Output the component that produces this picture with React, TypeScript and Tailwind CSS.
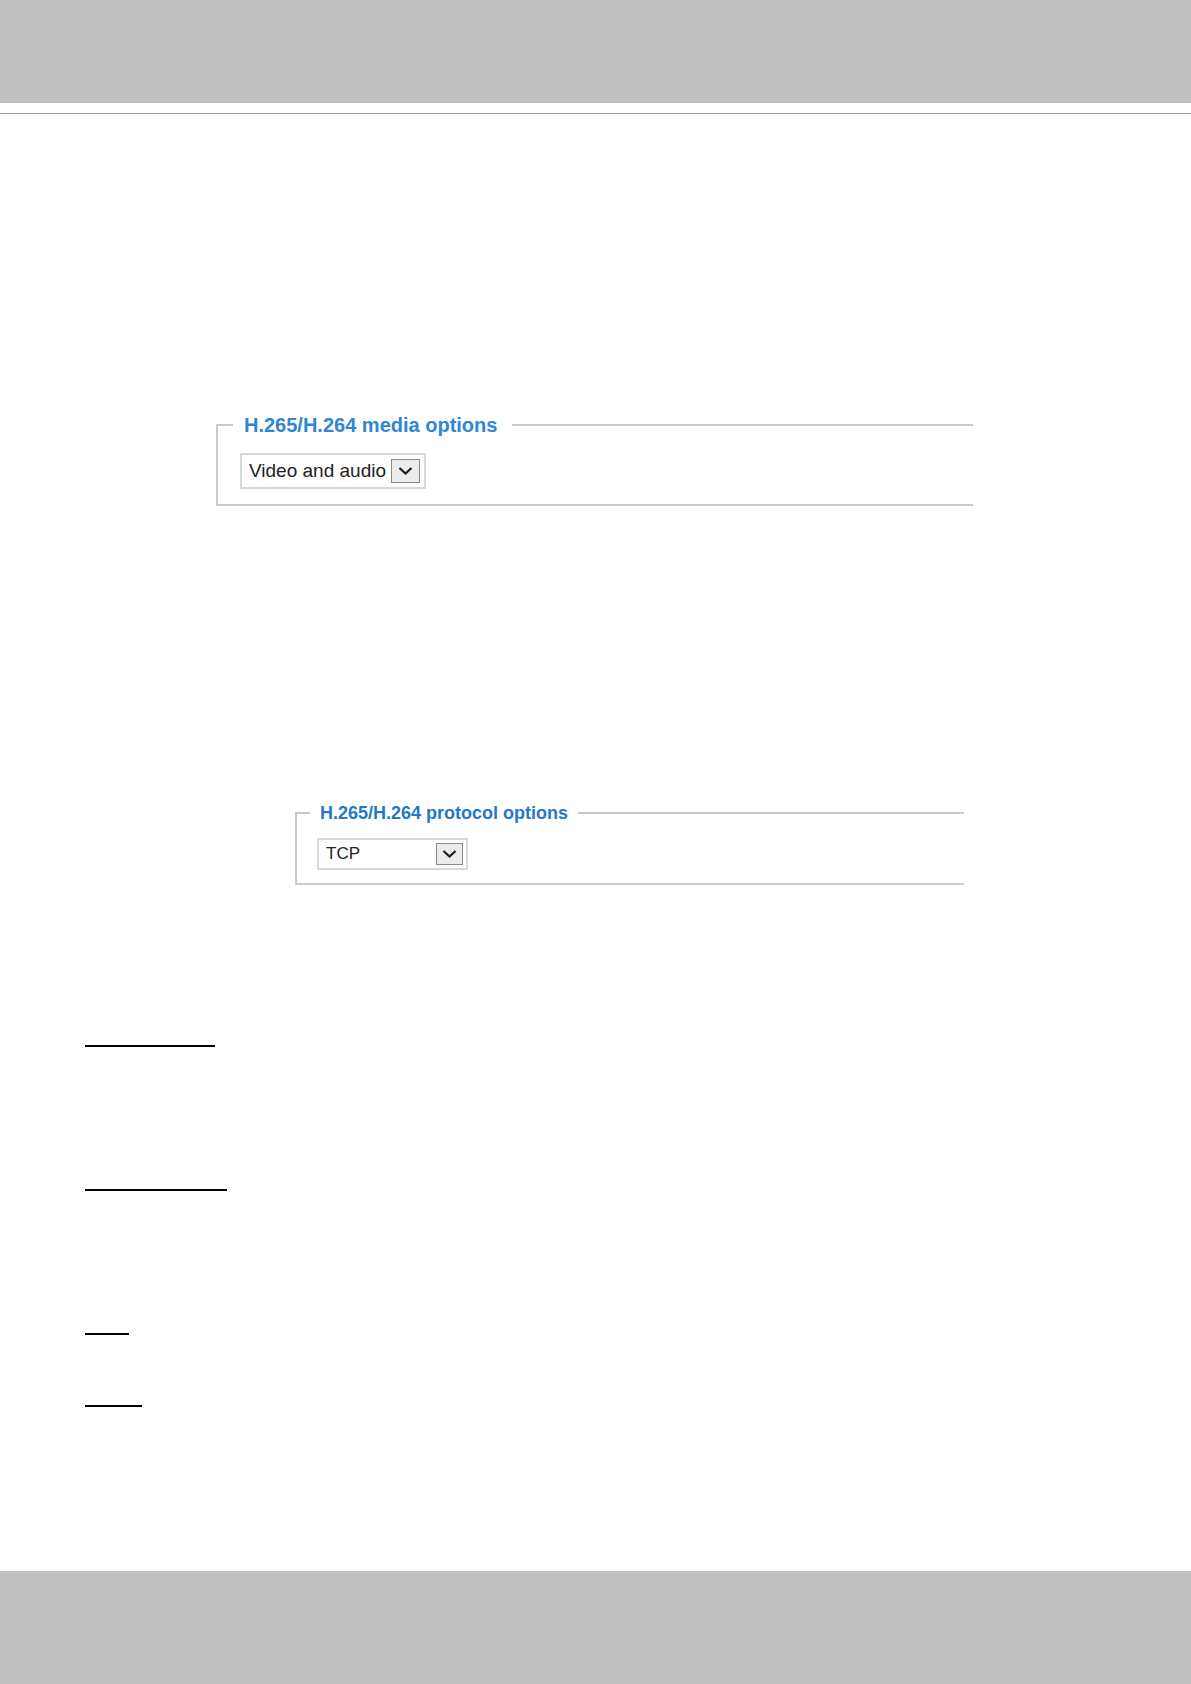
import React, { useState } from "react";

const MEDIA_OPTIONS = ["Video and audio", "Video only", "Audio only"];
const PROTOCOL_OPTIONS = ["TCP", "UDP", "HTTP"];

function Chevron() {
    return (
        <svg width="15" height="10" viewBox="0 0 15 10" fill="none" stroke="#1c1c1c" strokeWidth="2.2">
            <path d="M1.5 2 L7.5 7.5 L13.5 2" />
        </svg>
    );
}

export default function App() {
    const [media, setMedia] = useState(MEDIA_OPTIONS[0]);
    const [protocol, setProtocol] = useState(PROTOCOL_OPTIONS[0]);

    return (
        <div className="min-h-screen flex flex-col bg-white font-['Liberation_Sans',Arial,sans-serif]">
            <header className="h-[103px] bg-[#c0c0c0]" />
            <hr className="mt-[10px] border-t border-[#999999]" />

            <main className="pt-[299px]">
                {/* Media options */}
                <fieldset className="ml-[216px] mr-[218px] min-w-0 border-2 border-r-0 border-[#cacaca] px-[15px] pt-4 pb-[15px]">
                    <legend className="pl-[11px] pr-[15px] text-[20px] leading-6 font-bold text-[#2f86d6]">
                        H.265/H.264 media options
                    </legend>
                    <div className="relative ml-[7px] w-[186px]">
                        <select
                            aria-label="H.265/H.264 media options"
                            value={media}
                            onChange={(e) => setMedia(e.target.value)}
                            className="block appearance-none w-full h-9 pl-[7px] border-2 border-[#d3d9dd] bg-white text-[19px] leading-6 text-[#222222]"
                        >
                            {MEDIA_OPTIONS.map((o) => <option key={o}>{o}</option>)}
                        </select>
                        <span className="absolute right-[6px] top-[6px] w-[29px] h-[24px] flex items-center justify-center border border-[#8a8a8a] bg-[#ececec] pointer-events-none">
                            <Chevron />
                        </span>
                    </div>
                </fieldset>

                {/* Protocol options */}
                <fieldset className="mt-[295px] ml-[295px] mr-[227px] min-w-0 border-2 border-r-0 border-[#cacaca] px-[13px] py-[13px]">
                    <legend className="px-[10px] text-[18px] leading-6 font-bold text-[#2478c8]">
                        H.265/H.264 protocol options
                    </legend>
                    <div className="relative ml-[7px] w-[151px]">
                        <select
                            aria-label="H.265/H.264 protocol options"
                            value={protocol}
                            onChange={(e) => setProtocol(e.target.value)}
                            className="block appearance-none w-full h-8 pl-[7px] border-2 border-[#d3d9dd] bg-white text-[17px] leading-6 text-[#222222]"
                        >
                            {PROTOCOL_OPTIONS.map((o) => <option key={o}>{o}</option>)}
                        </select>
                        <span className="absolute right-[5px] top-[5px] w-[27px] h-[22px] flex items-center justify-center border border-[#8a8a8a] bg-[#ececec] pointer-events-none">
                            <Chevron />
                        </span>
                    </div>
                </fieldset>

                {/* Section rules */}
                <div className="mt-[160px] ml-[85px]">
                    <hr className="w-[130px] border-t-2 border-black" />
                    <hr className="mt-[142px] w-[142px] border-t-2 border-black" />
                    <hr className="mt-[142px] w-[44px] border-t-2 border-black" />
                    <hr className="mt-[70px] w-[57px] border-t-2 border-black" />
                </div>
            </main>

            <footer className="mt-auto h-[113px] bg-[#c0c0c0]" />
        </div>
    );
}
